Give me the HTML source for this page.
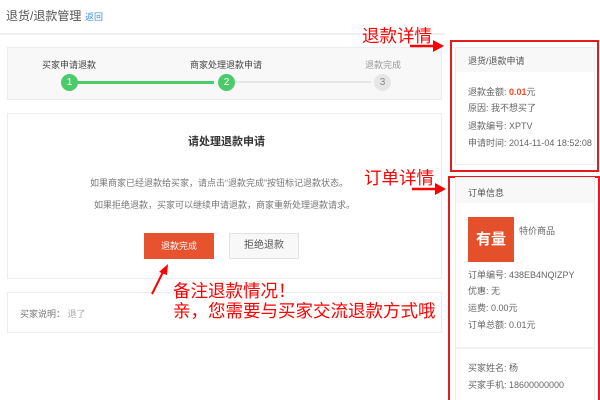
<!DOCTYPE html>
<html style="width:600px;height:400px;overflow:hidden"><head><meta charset="utf-8"><style>
*{margin:0;padding:0;box-sizing:border-box}
body{width:600px;height:400px;overflow:hidden;background:#fff;position:relative;font-family:"Liberation Sans","Noto Sans CJK SC",sans-serif;color:#555}
.a{position:absolute;white-space:nowrap}
.box{position:absolute;border:1px solid #ececec;background:#fff}
.red{color:#f00;font-size:17.5px;font-family:"Liberation Sans","Noto Sans CJK SC",sans-serif}
.s{font-size:9px;color:#666}
</style></head><body>
<div class="a" style="left:6px;top:7px;font-size:12px;color:#555">退货/退款管理</div>
<div class="a" style="left:85px;top:10px;font-size:9px;color:#3a8de0">返回</div>
<div class="a" style="left:0;top:33px;width:445px;height:2px;background:#f0f0f0"></div>

<div class="box" style="left:7px;top:47px;width:435px;height:53px;background:#f8f8f8"></div>
<div class="a s" style="left:42px;top:58px;color:#444">买家申请退款</div>
<div class="a s" style="left:190px;top:58px;color:#444">商家处理退款申请</div>
<div class="a s" style="left:365px;top:58px;color:#999">退款完成</div>
<div class="a" style="left:78px;top:81px;width:136px;height:3px;background:#4ccb6b"></div>
<div class="a" style="left:235px;top:81px;width:136px;height:2px;background:#e6e6e6"></div>
<div class="a" style="left:61px;top:74px;width:17px;height:17px;border-radius:50%;background:#4ccb6b;color:#fff;font-size:10px;text-align:center;line-height:17px">1</div>
<div class="a" style="left:218px;top:74px;width:17px;height:17px;border-radius:50%;background:#4ccb6b;color:#fff;font-size:10px;text-align:center;line-height:17px">2</div>
<div class="a" style="left:374px;top:74px;width:17px;height:17px;border-radius:50%;background:#e6e6e6;color:#888;font-size:10px;text-align:center;line-height:17px">3</div>

<div class="box" style="left:7px;top:113px;width:435px;height:166px"></div>
<div class="a" style="left:188px;top:133px;font-size:11px;color:#333;font-weight:bold">请处理退款申请</div>
<div class="a s" style="left:90px;top:176px;color:#777">如果商家已经退款给买家，请点击“退款完成”按钮标记退款状态。</div>
<div class="a s" style="left:94px;top:198px;color:#777">如果拒绝退款，买家可以继续申请退款，商家重新处理退款请求。</div>
<div class="a" style="left:144px;top:233px;width:70px;height:26px;background:#e8532f;color:#fff;font-size:9px;text-align:center;line-height:26px">退款完成</div>
<div class="a" style="left:229px;top:233px;width:70px;height:26px;background:#f8f8f8;border:1px solid #e2e2e2;color:#555;font-size:10px;text-align:center;line-height:24px">拒绝退款</div>

<div class="box" style="left:7px;top:292px;width:435px;height:41px"></div>
<div class="a s" style="left:20px;top:307px;color:#777">买家说明： <span style="color:#aaa">退了</span></div>

<div class="a red" style="left:362px;top:23px">退款详情</div>
<svg class="a" style="left:405px;top:38px" width="40" height="16"><line x1="5" y1="8" x2="28" y2="8" stroke="#f00" stroke-width="2.5"/><polygon points="28,2 39,8 28,14" fill="#f00"/></svg>
<div class="a red" style="left:364px;top:165px">订单详情</div>
<svg class="a" style="left:407px;top:181px" width="40" height="16"><line x1="5" y1="8" x2="28" y2="8" stroke="#f00" stroke-width="2.5"/><polygon points="28,2 39,8 28,14" fill="#f00"/></svg>
<div class="a red" style="left:173px;top:281px;line-height:20px">备注退款情况！<br>亲，您需要与买家交流退款方式哦</div>
<svg class="a" style="left:148px;top:262px" width="25" height="36"><line x1="4" y1="32" x2="15" y2="10" stroke="#f00" stroke-width="2"/><polygon points="20,2 11,10 19,13" fill="#f00"/></svg>

<div class="a" style="left:450px;top:40px;width:149px;height:132px;border:2px solid #e51c1c"></div>
<div class="box" style="left:455px;top:47px;width:140px;height:118px"></div>
<div class="a" style="left:456px;top:48px;width:138px;height:24px;background:#f8f8f8"></div>
<div class="a s" style="left:468px;top:54px;color:#555">退货/退款申请</div>
<div class="a s" style="left:468px;top:85px">退款金额: <b style="color:#f04a24">0.01</b>元</div>
<div class="a s" style="left:468px;top:101px">原因: 我不想买了</div>
<div class="a s" style="left:468px;top:119px">退款编号: XPTV</div>
<div class="a s" style="left:468px;top:136px">申请时间: 2014-11-04 18:52:08</div>

<div class="a" style="left:448px;top:176px;width:152px;height:230px;border:2px solid #e51c1c;border-bottom:none"></div>
<div class="a" style="left:455px;top:177px;width:140px;height:230px;border:1px solid #ececec;border-bottom:none;background:#fff"></div>
<div class="a" style="left:456px;top:178px;width:138px;height:25px;background:#f8f8f8"></div>
<div class="a s" style="left:468px;top:186px;color:#555">订单信息</div>
<div class="a" style="left:468px;top:217px;width:46px;height:45px;background:#e4502b;color:#fff;font-size:15px;font-weight:bold;line-height:45px;text-align:center">有量</div>
<div class="a s" style="left:519px;top:224px">特价商品</div>
<div class="a s" style="left:468px;top:268px">订单编号: 438EB4NQIZPY</div>
<div class="a s" style="left:468px;top:284px">优惠: 无</div>
<div class="a s" style="left:468px;top:301px">运费: 0.00元</div>
<div class="a s" style="left:468px;top:318px">订单总额: 0.01元</div>
<div class="a" style="left:456px;top:347px;width:138px;height:2px;background:#f2f2f2"></div>
<div class="a s" style="left:468px;top:361px">买家姓名: 杨</div>
<div class="a s" style="left:468px;top:378px">买家手机: 18600000000</div>
</body></html>
